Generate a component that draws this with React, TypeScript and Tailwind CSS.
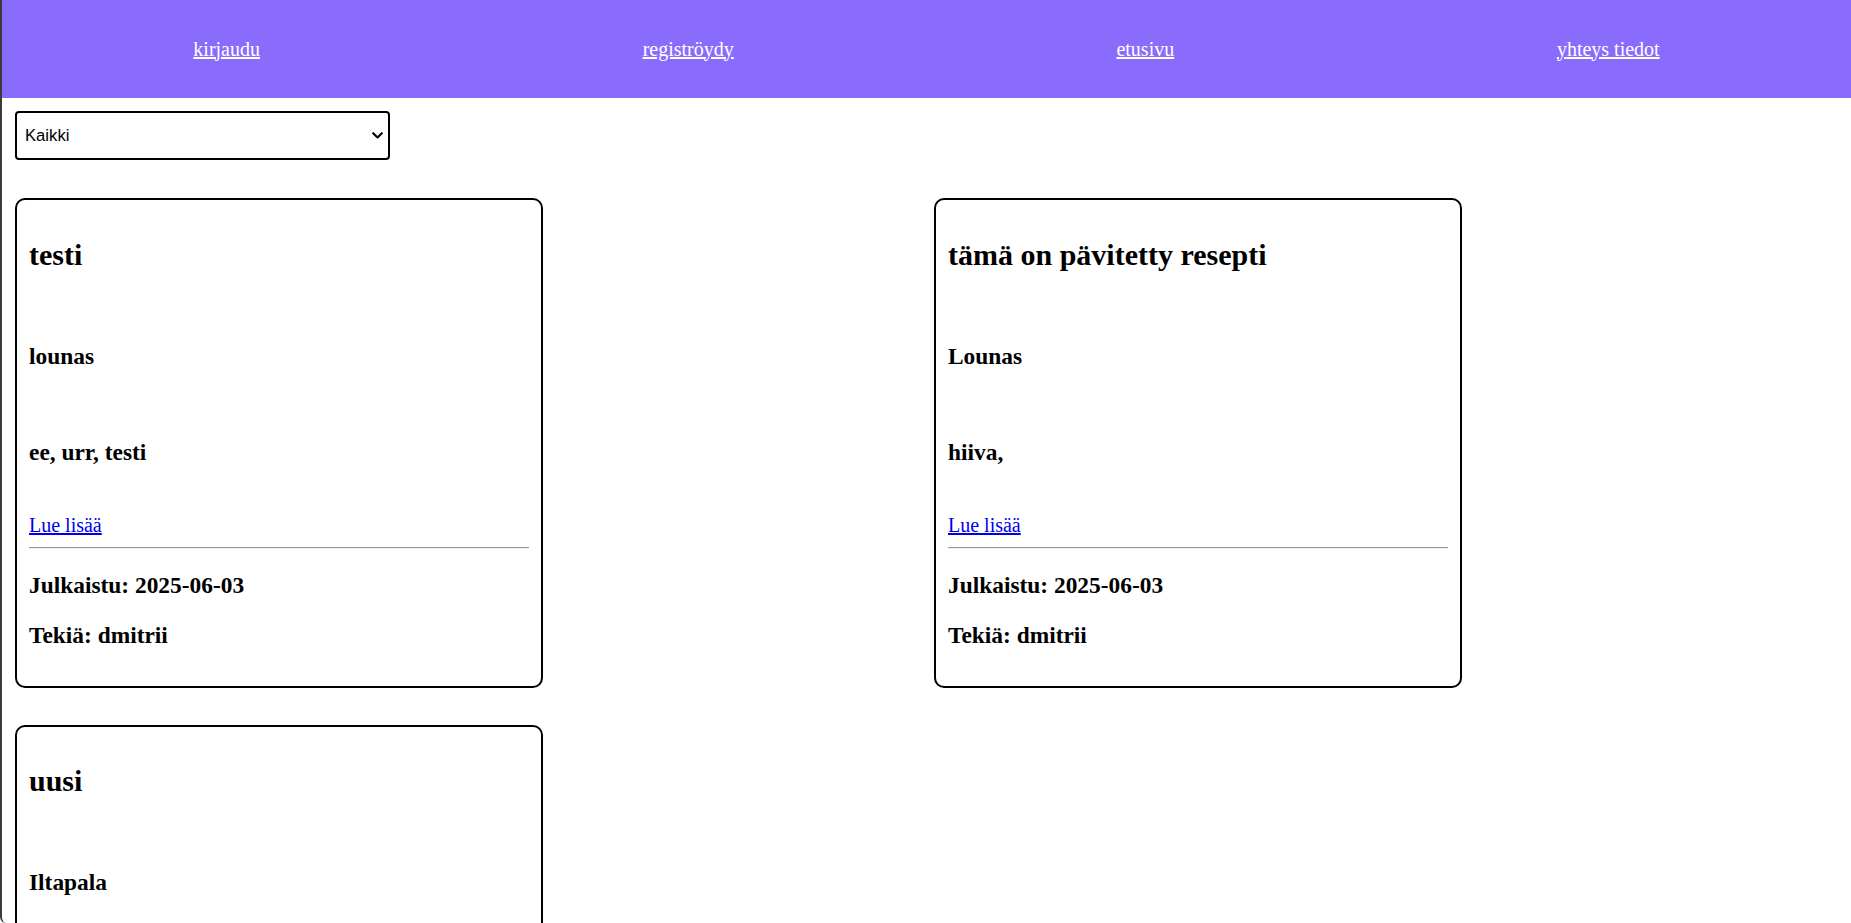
import { ChangeEvent, useState } from 'react';

interface Recipe {
  id: number;
  title: string;
  category: string;
  ingredients: string;
  date: string;
  author: string;
}

const recipes: Recipe[] = [
  { id: 1, title: 'testi', category: 'lounas', ingredients: 'ee, urr, testi', date: '2025-06-03', author: 'dmitrii' },
  { id: 2, title: 'tämä on pävitetty resepti', category: 'Lounas', ingredients: 'hiiva,', date: '2025-06-03', author: 'dmitrii' },
  { id: 3, title: 'uusi', category: 'Iltapala', ingredients: 'maito, leipä', date: '2025-06-03', author: 'dmitrii' },
];

const serif = "font-['Liberation_Serif','Times_New_Roman',serif]";

const RecipeCard = ({ recipe }: { recipe: Recipe }) => {
  return (
    <div className="w-[528px] border-2 border-black rounded-[10px] px-[12px] pt-[37.5px] pb-[37px] bg-white">
      <h2 className="text-[30px] leading-[34px] font-bold text-black">{recipe.title}</h2>
      <h3 className="mt-[71px] text-[23.4px] leading-[27px] font-bold text-black">{recipe.category}</h3>
      <h3 className="mt-[69.5px] text-[23.4px] leading-[27px] font-bold text-black">{recipe.ingredients}</h3>
      <p className="mt-[47.5px] text-[20px] leading-[23px]">
        <a href="#" className="text-[#0000ee] underline">Lue lisää</a>
      </p>
      <hr className="mt-[10.5px] h-0 border-0 border-t border-b border-t-[#9a9a9a] border-b-[#eeeeee]" />
      <h3 className="mt-[23px] text-[23.4px] leading-[27px] font-bold text-black">Julkaistu: {recipe.date}</h3>
      <h3 className="mt-[22.6px] text-[23.4px] leading-[27px] font-bold text-black">Tekiä: {recipe.author}</h3>
    </div>
  );
};

const App = () => {
  const [filter, setFilter] = useState('Kaikki');

  const shown = recipes.filter(
    (r) => filter === 'Kaikki' || r.category.toLowerCase() === filter.toLowerCase()
  );

  return (
    <div className={`h-screen overflow-hidden bg-white border-l-2 border-[#3b3b3b] rounded-bl-[6px] ${serif}`}>
      <nav className="h-[98px] bg-[#8a6cfd] flex items-center justify-around">
        <a href="#" className="text-white underline text-[20px] leading-[23px]">kirjaudu</a>
        <a href="#" className="text-white underline text-[20px] leading-[23px]">registröydy</a>
        <a href="#" className="text-white underline text-[20px] leading-[23px]">etusivu</a>
        <a href="#" className="text-white underline text-[20px] leading-[23px]">yhteys tiedot</a>
      </nav>

      <div className="px-[13px] pt-[13px]">
        <div className="relative w-[375px]">
          <select
            value={filter}
            onChange={(e: ChangeEvent<HTMLSelectElement>) => setFilter(e.target.value)}
            className="block w-full h-[49px] appearance-none border-2 border-black rounded-[4px] bg-white pl-[8px] pr-[24px] text-black text-[16.67px] font-['Liberation_Sans',Arial,sans-serif]"
          >
            <option>Kaikki</option>
            <option>Aamupala</option>
            <option>Lounas</option>
            <option>Päivällinen</option>
            <option>Iltapala</option>
          </select>
          <svg
            className="pointer-events-none absolute right-[7px] top-[21px]"
            width="11"
            height="7"
            viewBox="0 0 11 7"
            fill="none"
          >
            <path d="M1.2 1.2 L5.5 5.5 L9.8 1.2" stroke="#000" strokeWidth="2.1" strokeLinecap="round" strokeLinejoin="round" />
          </svg>
        </div>

        <div className="mt-[38px] grid grid-cols-2 gap-x-[17px] gap-y-[37px] pr-[2px]">
          {shown.map((recipe) => (
            <RecipeCard key={recipe.id} recipe={recipe} />
          ))}
        </div>
      </div>
    </div>
  );
};

export default App;
